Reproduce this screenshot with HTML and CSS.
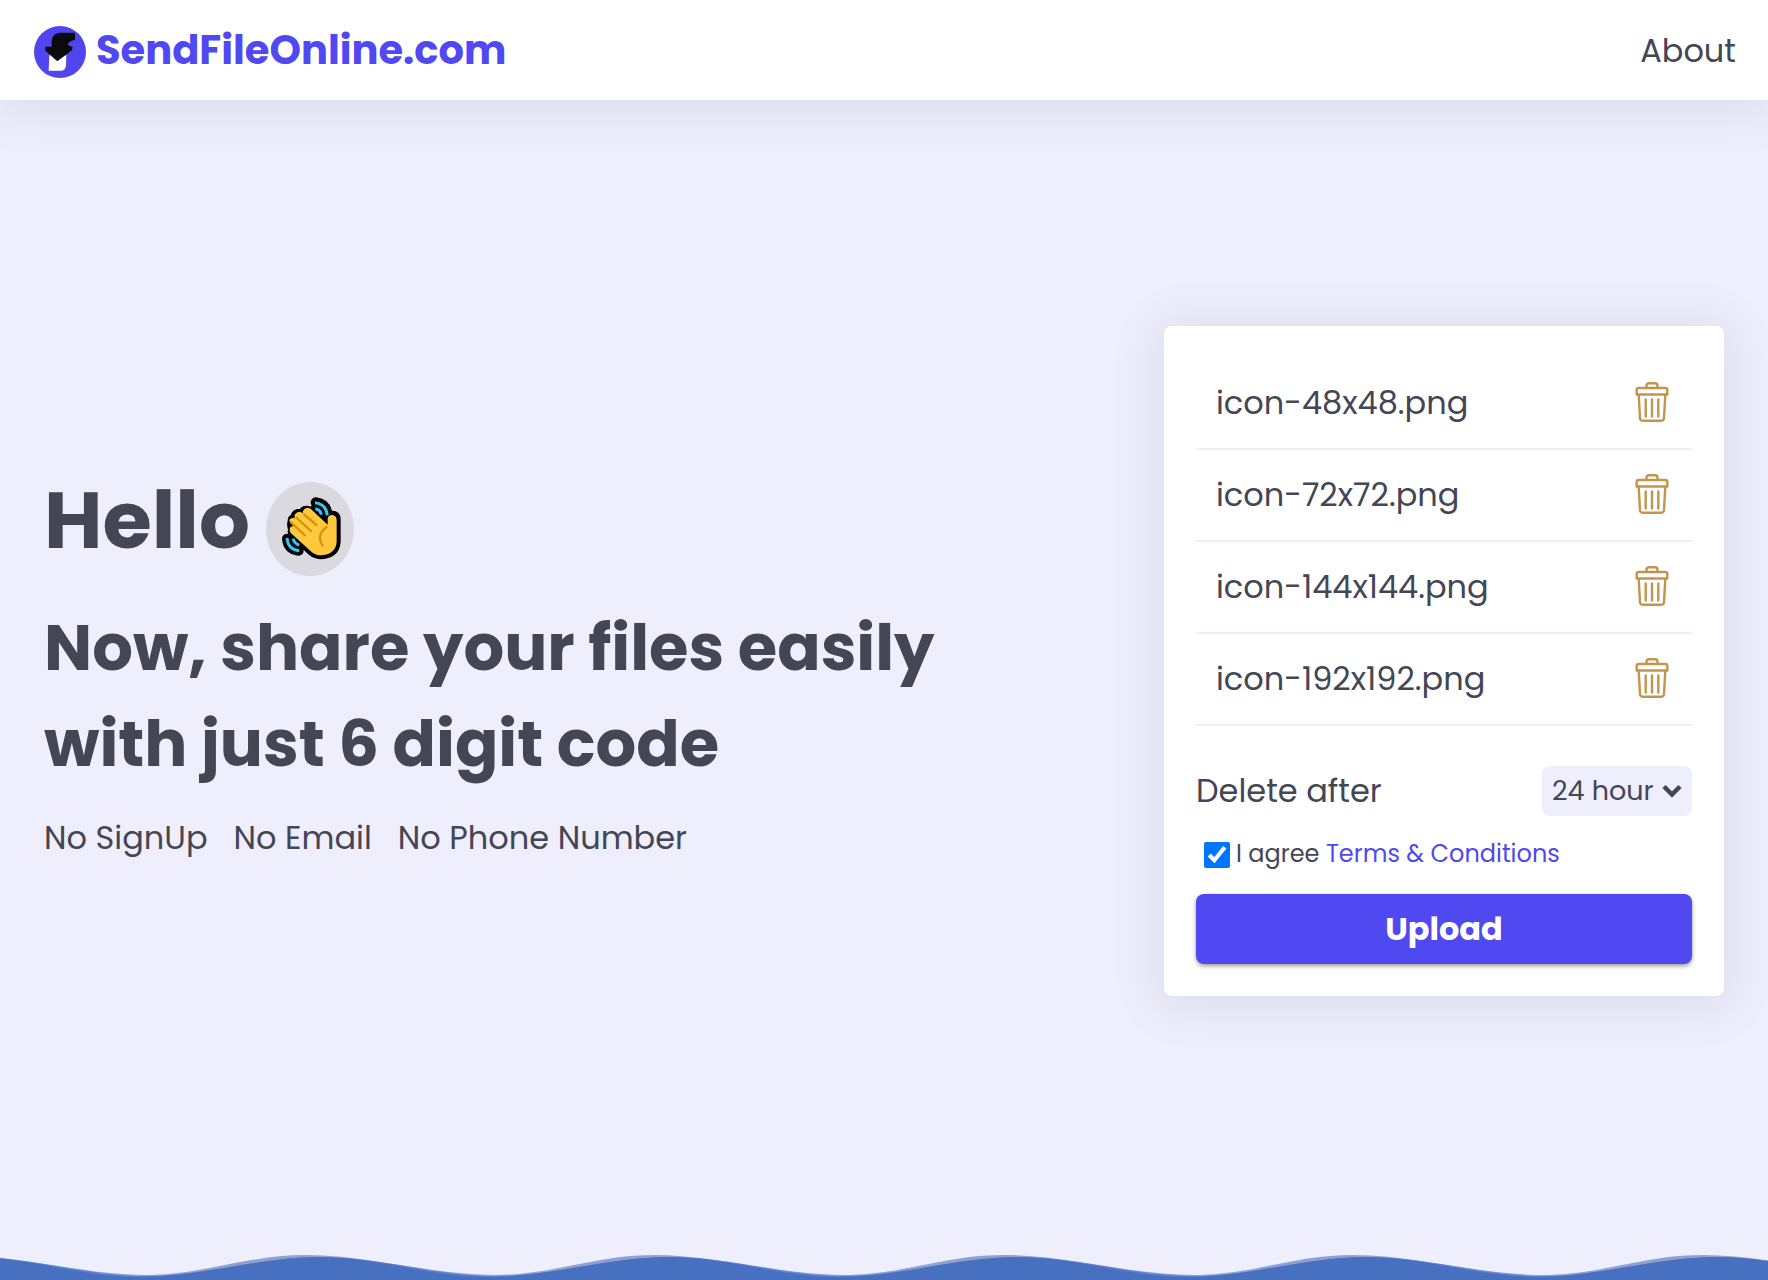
FILE: index.html
```html
<!DOCTYPE html>
<html lang="en">
<head>
  <meta charset="utf-8">
  <meta name="viewport" content="width=device-width, initial-scale=1">
  <title>SendFileOnline.com</title>
  <link rel="stylesheet" href="styles.css">
</head>
<body>
  <svg class="sprite" width="0" height="0" aria-hidden="true">
    <symbol id="trash" viewBox="0 0 40 40">
      <g fill="none" stroke="currentColor" stroke-width="2.400" stroke-linecap="round" stroke-linejoin="round">
        <path d="M14.500 5V3.500Q14.500 1.300 17 1.300H23Q25.500 1.300 25.500 3.500V5"/>
        <path d="M6.500 6H33.500Q35.300 6 35.300 8V12.500H4.700V8Q4.700 6 6.500 6Z"/>
        <path d="M6.700 13L8 36Q8.200 38.700 10.500 38.700H29.500Q31.800 38.700 32 36L33.300 13"/>
        <path d="M13.700 17.500V34.500M20 17.500V34.500M26.300 17.500V34.500"/>
      </g>
    </symbol>
  </svg>

  <header class="header">
    <a class="brand" href="#">
      <svg class="brand-logo" viewBox="0 0 156 156" aria-hidden="true">
        <circle cx="78" cy="78" r="78" fill="#5145f0"/>
        <path d="M46 88H97L96 119Q94 134 80 134H44Z" fill="#fff"/>
        <path d="M123 20V42Q108 43 101 55Q104 62 116 61L114 73L70 106L34 74V62H53V46Q54 21 80 20Z" fill="#0b0b0d"/>
      </svg>
      <span>SendFileOnline.com</span>
    </a>
    <nav><a class="nav-link" href="#">About</a></nav>
  </header>

  <main class="hero">
    <section class="intro">
      <h1 class="hello">
        Hello
        <svg class="wave-hand" viewBox="48 36 264 282" role="img" aria-label="Waving hand">
          <g fill="none" stroke="#000" stroke-width="30" stroke-linecap="round" stroke-linejoin="round">
            <path d="M197 97Q229 101 232 132M197 114Q211 118 214 132"/>
            <path d="M111 206Q114 239 146 242M129 208Q134 221 146 224"/>
          </g>
          <path d="M125 154Q124 145 135 143Q132 132 144 129Q151 128 156 132Q159 118 172 119Q177 119 182 124L232 168V147Q232 134 246 134Q260 134 260 148V216Q257 252 216 256Q196 256 184 245L130 195Q122 186 127 178Q121 169 125 154Z" fill="#ffc83d" stroke="#000" stroke-width="24" stroke-linejoin="round"/>
          <g fill="none" stroke="#2fc9f5" stroke-width="9">
            <path d="M195 98Q228 101 232 136M196 116Q211 119 214 134"/>
            <path d="M111 204Q114 240 148 242M129 206Q134 222 148 225"/>
          </g>
          <path d="M118 153Q119 142 134 145Q131 130 145 126Q152 124 158 130Q159 114 173 113Q179 113 185 119L233 164V149Q232 136 246 135Q260 136 260 150V216Q257 252 216 256Q196 256 184 245L123 190Q115 180 122 170Q128 168 134 168L121 157Z" fill="#ffc83d"/>
          <g fill="none" stroke="#d8930a" stroke-width="7" stroke-linecap="round">
            <path d="M123 157L165 196M140 144L183 183M162 133L199 165M230 171Q197 196 218 227"/>
          </g>
        </svg>
      </h1>
      <h2 class="tagline">Now, share your files easily<br>with just 6 digit code</h2>
      <ul class="perks">
        <li>No SignUp</li>
        <li>No Email</li>
        <li>No Phone Number</li>
      </ul>
    </section>

    <form class="card">
      <ul class="files">
        <li class="file"><span>icon-48x48.png</span><button class="remove" type="button" aria-label="Remove icon-48x48.png"><svg class="remove-icon"><use href="#trash"/></svg></button></li>
        <li class="file"><span>icon-72x72.png</span><button class="remove" type="button" aria-label="Remove icon-72x72.png"><svg class="remove-icon"><use href="#trash"/></svg></button></li>
        <li class="file"><span>icon-144x144.png</span><button class="remove" type="button" aria-label="Remove icon-144x144.png"><svg class="remove-icon"><use href="#trash"/></svg></button></li>
        <li class="file"><span>icon-192x192.png</span><button class="remove" type="button" aria-label="Remove icon-192x192.png"><svg class="remove-icon"><use href="#trash"/></svg></button></li>
      </ul>
      <div class="expiry">
        <label for="expiry">Delete after</label>
        <div class="select-wrap">
          <select class="select" id="expiry"><option>24 hour</option></select>
          <svg class="chevron" viewBox="0 0 20 14" aria-hidden="true"><path d="M2 2.500L10 10.500L18 2.500" fill="none" stroke="currentColor" stroke-width="4.500"/></svg>
        </div>
      </div>
      <div class="terms">
        <input class="check" type="checkbox" id="agree" checked>
        <label class="terms-label" for="agree">I agree <a class="terms-link" href="#">Terms &amp; Conditions</a></label>
      </div>
      <button class="upload" type="submit">Upload</button>
    </form>
  </main>

  <footer class="footer">
    <svg class="waves" viewBox="0 0 1768 28" preserveAspectRatio="none" aria-hidden="true">
      <path fill="#8fa1d3" d="M-204 23C-144 23 -104 3 -44 3S85 23 145 23S246 3 306 3S434 23 494 23S595 3 655 3S783 23 843 23S944 3 1004 3S1133 23 1193 23S1293 3 1353 3S1482 23 1542 23S1643 3 1703 3S1832 23 1892 23V28H-204Z"/>
      <path fill="#5a80d6" d="M-204 24C-144 24 -88 5 -28 5S86 24 146 24S261 5 321 5S435 24 495 24S610 5 670 5S784 24 844 24S959 5 1019 5S1134 24 1194 24S1308 5 1368 5S1483 24 1543 24S1658 5 1718 5S1833 24 1893 24V28H-204Z"/>
      <path fill="#4870c0" d="M-210 25C-150 25 -90 5 -30 5S80 25 140 25S259 5 319 5S429 25 489 25S608 5 668 5S778 25 838 25S957 5 1017 5S1128 25 1188 25S1306 5 1366 5S1477 25 1537 25S1656 5 1716 5S1827 25 1887 25V28H-210Z"/>
    </svg>
  </footer>
</body>
</html>
```
FILE: styles.css
```css
:root {
  --primary: #5048f0;
  --ink: #444655;
  --tint: #efeefc;
  --shadow: 0 4px 50px 10px rgba(0, 0, 0, 0.07);
}

* {
  box-sizing: border-box;
}

body {
  display: flex;
  flex-direction: column;
  min-height: 100vh;
  margin: 0;
  background: var(--tint);
  color: var(--ink);
  font-family: Poppins, Inter, sans-serif;
  font-size: 32px;
  line-height: 48px;
}

h1,
h2,
ul {
  margin: 0;
  padding: 0;
}

ul {
  list-style: none;
}

a {
  color: inherit;
  text-decoration: none;
}

button,
select {
  border: 0;
  color: inherit;
  font: inherit;
  cursor: pointer;
}

.sprite {
  position: absolute;
}

.header {
  display: flex;
  align-items: center;
  justify-content: space-between;
  height: 100px;
  padding: 0 32px;
  background: #fff;
  box-shadow: var(--shadow);
}

.brand {
  display: flex;
  align-items: center;
  gap: 8px;
  color: var(--primary);
  font-size: 40px;
  font-weight: 700;
}

.brand-logo {
  width: 56px;
  height: 56px;
  padding: 4px 2px 0;
}

.nav-link {
  display: block;
  padding-top: 2px;
}

.hero {
  display: flex;
  flex: 1;
  align-items: center;
  justify-content: space-between;
  gap: 32px;
  padding: 32px 44px;
}

.intro {
  display: flex;
  flex-direction: column;
  gap: 20px;
}

.hello {
  display: flex;
  align-items: flex-end;
  gap: 16px;
  font-size: 80px;
  line-height: 120px;
}

.wave-hand {
  width: 88px;
  height: 94px;
  margin-bottom: 4px;
  border-radius: 50%;
  background: #dad9df;
}

.tagline {
  font-size: 64px;
  line-height: 96px;
}

.perks {
  display: flex;
  gap: 26px;
  padding-top: 2px;
}

.card {
  flex: 0 0 560px;
  padding: 32px;
  border-radius: 8px;
  background: #fff;
  box-shadow: var(--shadow);
}

.file {
  display: flex;
  align-items: center;
  justify-content: space-between;
  padding: 21px 20px;
  border-bottom: 2px solid var(--tint);
}

.remove {
  display: flex;
  padding: 0 0 2px;
  background: none;
  color: #c2954c;
}

.remove-icon {
  width: 40px;
  height: 40px;
}

.expiry {
  display: flex;
  align-items: center;
  justify-content: space-between;
  margin-top: 40px;
}

.select-wrap {
  position: relative;
  width: 150px;
}

.select {
  display: block;
  width: 100%;
  height: 50px;
  padding: 0 10px;
  border-radius: 8px;
  background: var(--tint);
  font-size: 27px;
  appearance: none;
}

.chevron {
  position: absolute;
  top: 18px;
  right: 10px;
  width: 20px;
  height: 14px;
  pointer-events: none;
}

.terms {
  display: flex;
  align-items: center;
  gap: 6px;
  margin: 20px 8px;
  font-size: 24px;
  line-height: 36px;
}

.terms-label {
  padding-bottom: 2px;
}

.check {
  width: 26px;
  height: 26px;
  margin: 0;
}

.terms-link {
  color: var(--primary);
}

.upload {
  width: 100%;
  height: 70px;
  border-radius: 8px;
  background: var(--primary);
  box-shadow: 0 2px 4px rgba(0, 0, 0, 0.4);
  color: #fff;
  font-weight: 700;
}

.footer {
  display: flex;
  align-items: flex-end;
  height: 58px;
}

.waves {
  display: block;
  width: 100%;
  height: 28px;
}
```
